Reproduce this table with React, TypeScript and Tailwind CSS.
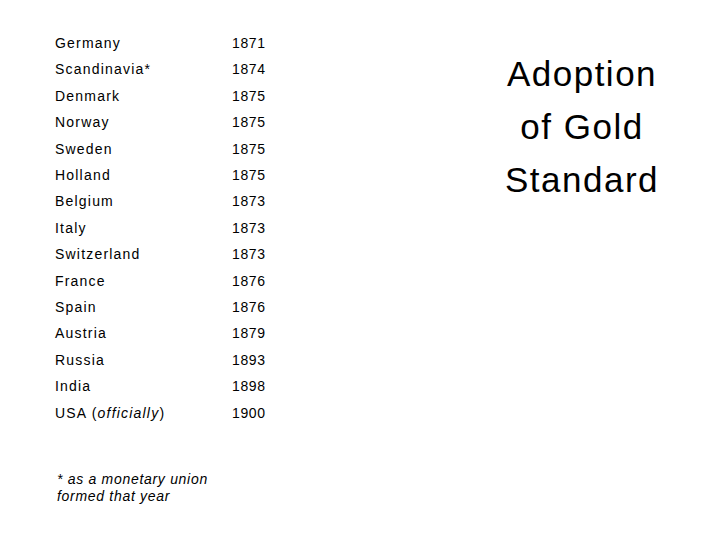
const rows = [
  ["Germany", "1871"],
  ["Scandinavia*", "1874"],
  ["Denmark", "1875"],
  ["Norway", "1875"],
  ["Sweden", "1875"],
  ["Holland", "1875"],
  ["Belgium", "1873"],
  ["Italy", "1873"],
  ["Switzerland", "1873"],
  ["France", "1876"],
  ["Spain", "1876"],
  ["Austria", "1879"],
  ["Russia", "1893"],
  ["India", "1898"],
];

export default function App() {
  return (
    <div className="w-[720px] h-[540px] bg-white text-black font-['Liberation_Sans',Arial,sans-serif] flex">
      {/* Tabla de países */}
      <div className="pl-[55px] pt-[30px] flex flex-col w-[450px]">
        <div className="flex flex-col text-[14px] leading-[26.4px] tracking-[1.2px]">
          {rows.map(([country, year]) => (
            <div key={country} className="flex">
              <span className="w-[177px]">{country}</span>
              <span className="tracking-[0.6px]">{year}</span>
            </div>
          ))}
          <div className="flex">
            <span className="w-[177px]">
              USA (<i>officially</i>)
            </span>
            <span className="tracking-[0.6px]">1900</span>
          </div>
        </div>

        <p className="mt-[45px] pl-[2px] text-[14px] leading-[17px] italic tracking-[0.7px]">
          * as a monetary union
          <br />
          formed that year
        </p>
      </div>

      {/* Título */}
      <div className="flex-1 pt-[47px] pr-[6px]">
        <h1 className="text-center text-[35px] leading-[53px] tracking-[1.5px]">
          Adoption
          <br />
          of Gold
          <br />
          Standard
        </h1>
      </div>
    </div>
  );
}
